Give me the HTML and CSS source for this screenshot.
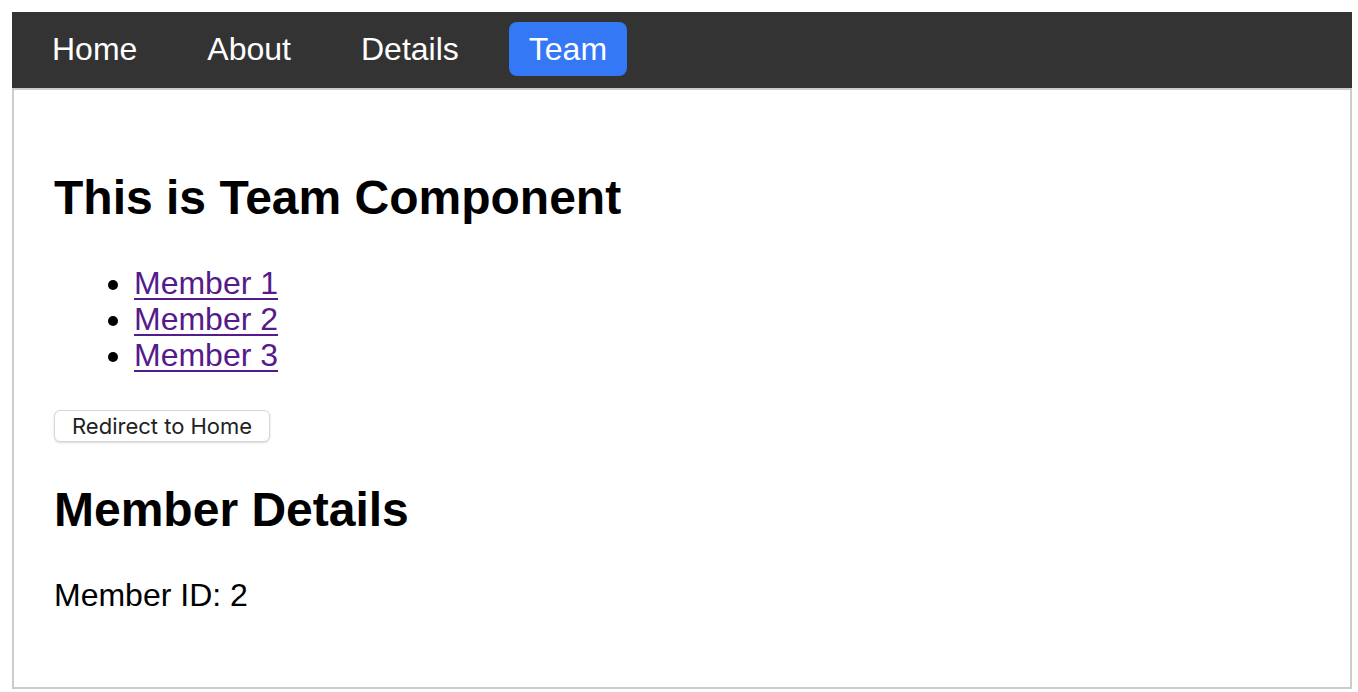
FILE: index.html
```html
<!DOCTYPE html>
<html lang="en">
<head>
<meta charset="utf-8">
<title>Team</title>
<link rel="stylesheet" href="styles.css">
</head>
<body>
<div class="app">
  <nav class="nav">
    <a class="nav-link" href="#">Home</a>
    <a class="nav-link" href="#">About</a>
    <a class="nav-link" href="#">Details</a>
    <a class="nav-link active" href="#">Team</a>
  </nav>
  <main class="content">
    <h2 class="title">This is Team Component</h2>
    <ul class="members">
      <li><a class="member-link" href="#">Member 1</a></li>
      <li><a class="member-link" href="#">Member 2</a></li>
      <li><a class="member-link" href="#">Member 3</a></li>
    </ul>
    <button class="redirect" type="button">Redirect to Home</button>
    <h2 class="title">Member Details</h2>
    <p class="member-id">Member ID: 2</p>
  </main>
</div>
</body>
</html>
```

FILE: styles.css
```css
html, body {
  margin: 0;
  padding: 0;
  background: #ffffff;
}

body {
  font-family: "Liberation Sans", Arial, sans-serif;
  font-size: 32px;
  color: #000000;
}

.app {
  padding: 12px 6px 0 12px;
}

.nav {
  display: flex;
  align-items: flex-start;
  gap: 30px;
  background: #333333;
  height: 76px;
  padding: 10px 20px 0;
  box-sizing: border-box;
}

.nav-link {
  display: block;
  color: #ffffff;
  text-decoration: none;
  font-size: 32px;
  line-height: 36px;
  padding: 9px 20px;
  border-radius: 8px;
}

.nav-link.active {
  background: #3478f6;
}

.content {
  border: 2px solid #cccccc;
  padding: 40px 40px 41px;
}

.title {
  font-size: 48px;
  font-weight: bold;
  line-height: 55px;
  margin: 40px 0;
}

.members {
  margin: 32px 0;
  padding-left: 80px;
  line-height: 36px;
}

.member-link {
  color: #551a8b;
  text-decoration: underline;
  text-decoration-thickness: 2px;
  text-underline-offset: 4px;
}

.redirect {
  display: block;
  margin: 37px 0 0;
  height: 32px;
  padding: 0 17px;
  font-family: Inter, "Liberation Sans", sans-serif;
  font-size: 22px;
  color: #222222;
  background: #ffffff;
  border: 1px solid #d6d6d6;
  border-radius: 6px;
  box-shadow: 0 1px 2px rgba(0, 0, 0, 0.15);
}

.member-id {
  margin: 33px 0 32px;
  line-height: 36.8px;
}
```
